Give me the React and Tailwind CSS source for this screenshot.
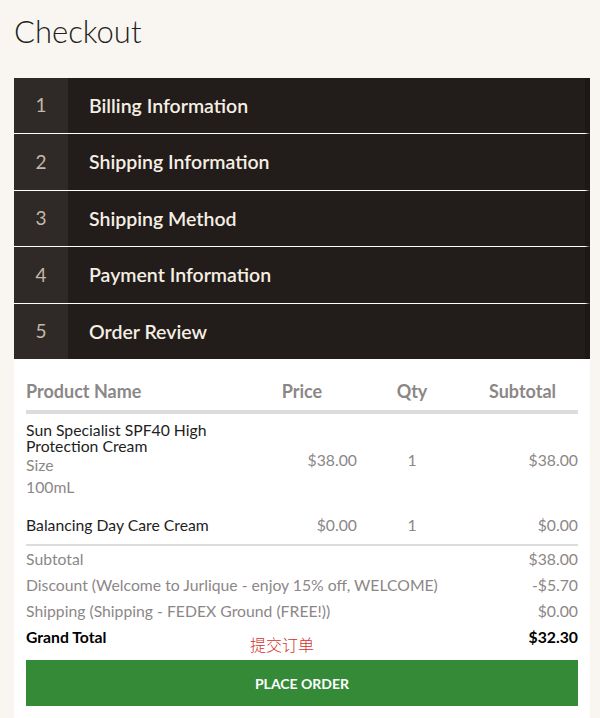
import React from "react";

const steps = [
  "Billing Information",
  "Shipping Information",
  "Shipping Method",
  "Payment Information",
  "Order Review",
];

export default function App() {
  const font = { fontFamily: "Lato, 'Noto Sans', sans-serif" };
  return (
    <div className="min-h-[718px] w-[600px] bg-[#f9f6f2] pb-0" style={font}>
      <div className="pl-[14px] pr-[10px]">
        <h1 className="pt-[12px] pb-[28px] text-[31px] leading-[38px] font-light text-[#231e1d]">
          Checkout
        </h1>
        <div className="flex flex-col bg-white">
          {steps.map((s, i) => (
            <div
              key={s}
              className={
                "flex bg-[#221c1b] border-r-[5px] border-r-[#1d1817] " +
                (i > 0 ? "h-[56.5px] border-t-[1.5px] border-t-white" : "h-[55px]")
              }
            >
              <div className="flex w-[54px] items-center justify-center bg-[#2f2927] text-[19px] text-[#c4b8a8]">
                {i + 1}
              </div>
              <div className="flex items-center pl-[21px] text-[19.5px] font-semibold text-[#f5efe3]">
                {s}
              </div>
            </div>
          ))}
          <div className="relative px-[12px] pt-[13px] pb-[12px]">
            <div className="grid grid-cols-[221px_110px_110px_111px] h-[38px] items-center text-[18px] font-bold text-[#8c8787]">
              <div>Product Name</div>
              <div className="text-center">Price</div>
              <div className="text-center">Qty</div>
              <div className="text-center">Subtotal</div>
            </div>
            <div className="h-[4px] bg-[#dcdcdc]" />
            <div className="grid grid-cols-[221px_110px_110px_111px] items-center py-[8px] text-[15.75px]">
              <div>
                <div className="leading-[16px] text-[#231e1d]">
                  Sun Specialist SPF40 High
                  <br />
                  Protection Cream
                </div>
                <div className="leading-[22px] text-[#8c8787]">Size</div>
                <div className="leading-[22px] text-[#8c8787]">100mL</div>
              </div>
              <div className="text-right text-[#8c8787]">$38.00</div>
              <div className="text-center text-[#8c8787]">1</div>
              <div className="text-right text-[#8c8787]">$38.00</div>
            </div>
            <div className="grid grid-cols-[221px_110px_110px_111px] items-center py-[8px] text-[15.75px] leading-[22px]">
              <div className="text-[#231e1d]">Balancing Day Care Cream</div>
              <div className="text-right text-[#8c8787]">$0.00</div>
              <div className="text-center text-[#8c8787]">1</div>
              <div className="text-right text-[#8c8787]">$0.00</div>
            </div>
            <div className="h-[2px] bg-[#dcdcdc]" />
            <div className="text-[15.75px] leading-[26px] text-[#8c8787]">
              <div className="flex justify-between">
                <span>Subtotal</span>
                <span>$38.00</span>
              </div>
              <div className="flex justify-between">
                <span>Discount (Welcome to Jurlique - enjoy 15% off, WELCOME)</span>
                <span>-$5.70</span>
              </div>
              <div className="flex justify-between">
                <span>Shipping (Shipping - FEDEX Ground (FREE!))</span>
                <span>$0.00</span>
              </div>
              <div className="flex justify-between font-bold text-black">
                <span>Grand Total</span>
                <span>$32.30</span>
              </div>
            </div>
            <div
              className="absolute left-[236px] top-[275px] text-[16px] leading-[20px] text-[#d3302c]"
              style={{ fontFamily: "'Noto Sans CJK SC', sans-serif", fontWeight: 300 }}
            >
              提交订单
            </div>
            <button className="mt-[10px] flex h-[46px] w-full items-center justify-center bg-[#348a37] text-[14px] font-bold text-white">
              PLACE ORDER
            </button>
          </div>
        </div>
      </div>
    </div>
  );
}
